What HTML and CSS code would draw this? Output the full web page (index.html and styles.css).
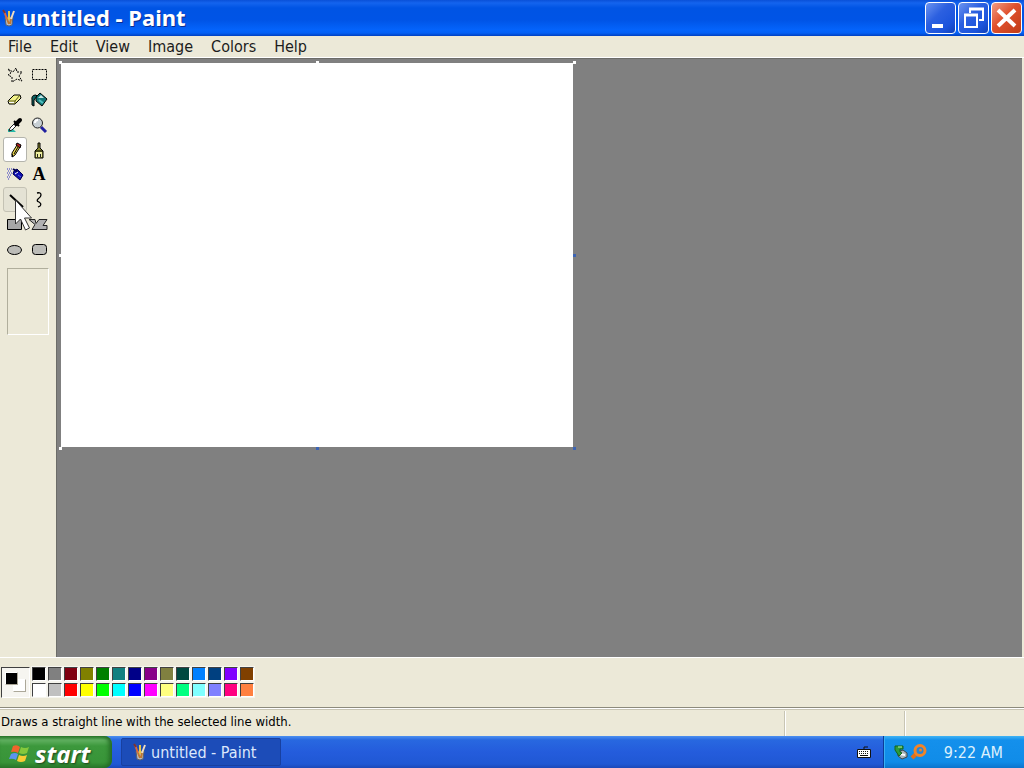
FILE: index.html
```html
<!DOCTYPE html>
<html lang="en">
<head>
    <meta charset="UTF-8">
    <meta name="viewport" content="width=device-width, initial-scale=1.0">
    <title>untitled - Paint</title>
    <link rel="stylesheet" href="styles.css">
</head>
<body>
    <!-- shared icon, used by the title bar and the taskbar -->
    <svg class="defs" width="0" height="0">
        <symbol id="paint" viewBox="0 0 14 18">
            <path d="M3 8h8l-1 8q-3 2-6 0z" fill="#b9bcc4" stroke="#59606e"/>
            <path d="M5 10L2 2" stroke="#e06a3a" stroke-width="2"/>
            <path d="M7 11V2" stroke="#e9c84a" stroke-width="2"/>
            <path d="M9 10l3-8" stroke="#f0ddc0" stroke-width="2"/>
            <path d="M5 10l2 5M9 10l-1 5" stroke="#c07830" stroke-width="2"/>
            <path d="M1 1l2 3" stroke="#7a3434" stroke-width="2"/>
        </symbol>
    </svg>

    <div class="window">
        <header class="titlebar">
            <svg class="title-icon" width="14" height="18"><use href="#paint"/></svg>
            <h1>untitled - Paint</h1>
            <div class="controls">
                <button class="control" aria-label="Minimize">
                    <svg width="30" height="30" viewBox="0 0 30 30"><path d="M6 21h11v4H6z" fill="#fff"/></svg>
                </button>
                <button class="control" aria-label="Restore">
                    <svg width="30" height="30" viewBox="0 0 30 30" fill="none" stroke="#fff">
                        <path d="M11 10V6h13v11h-4" stroke-width="2"/><path d="M10 6h15" stroke-width="3"/>
                        <path d="M6 12h12v12H6z" stroke-width="2"/><path d="M5 12h14" stroke-width="3"/>
                    </svg>
                </button>
                <button class="control close" aria-label="Close">
                    <svg width="30" height="30" viewBox="0 0 30 30"><path d="M6 7l17 16M23 7L6 23" stroke="#fff" stroke-width="4"/></svg>
                </button>
            </div>
        </header>

        <nav class="menubar">
            <button>File</button>
            <button>Edit</button>
            <button>View</button>
            <button>Image</button>
            <button>Colors</button>
            <button>Help</button>
        </nav>

        <main class="workspace">
            <aside class="sidebar">
                <div class="tools">
                    <button class="tool" aria-label="Free-form select">
                        <svg width="18" height="18" viewBox="0 0 18 18"><path d="M2 3l5 3 3-4 1 4 5 0-3 4 3 5-5-2-5 3 0-5-4-2 3-2z" fill="none" stroke="#000" stroke-dasharray="2 1"/></svg>
                    </button>
                    <button class="tool" aria-label="Select">
                        <svg width="18" height="18" viewBox="0 0 18 18"><path d="M2.500 3.500h14v10h-14z" fill="none" stroke="#000" stroke-dasharray="2 1"/></svg>
                    </button>
                    <button class="tool" aria-label="Eraser">
                        <svg width="18" height="18" viewBox="0 0 18 18"><path d="M2 10l6-6h6l1 3-6 6H3z" fill="#f4f488" stroke="#000"/><path d="M2 10h7l5-6M9 10v3" fill="none" stroke="#55551c"/><path d="M3 11h5v1H3z" fill="#fff"/></svg>
                    </button>
                    <button class="tool" aria-label="Fill">
                        <svg width="18" height="18" viewBox="0 0 18 18"><path d="M6 6l4-4 7 6-5 7-6-5z" fill="#147878" stroke="#000"/><path d="M8 7l3-3 3 3z" fill="#c8e4e4"/><path d="M9 9l4 3" stroke="#50c0c0" stroke-width="2"/><path d="M6 4Q1 4 2 9v5l2 1V9l3-4z" fill="#0c6464" stroke="#000"/></svg>
                    </button>
                    <button class="tool" aria-label="Pick color">
                        <svg width="18" height="18" viewBox="0 0 18 18"><path d="M2 13h5l3 3H2z" fill="#28b8a8"/><path d="M3 15l1-3 5-5 2 2-5 5z" fill="#fff" stroke="#222"/><path d="M8 5l5 5" stroke="#000" stroke-width="2"/><path d="M10 8l4-4" stroke="#000" stroke-width="4" stroke-linecap="round"/></svg>
                    </button>
                    <button class="tool" aria-label="Magnifier">
                        <svg width="18" height="18" viewBox="0 0 18 18"><path d="M11 11l5 5" stroke="#2020a0" stroke-width="3"/><circle cx="7.500" cy="7" r="5" fill="#c8d0d4" stroke="#222"/><path d="M5 7q0-3 3-3" fill="none" stroke="#fff" stroke-width="2"/></svg>
                    </button>
                    <button class="tool active" aria-label="Pencil">
                        <svg width="18" height="18" viewBox="0 0 18 18"><path d="M6 16v-4l5-8 3 2-5 8z" fill="#f0dc50" stroke="#000"/><path d="M11 2l4 2-1 3-4-3z" fill="#b02020" stroke="#000"/><path d="M8 13l4-7M6 13l1 3" stroke="#000"/></svg>
                    </button>
                    <button class="tool" aria-label="Brush">
                        <svg width="18" height="18" viewBox="0 0 18 18"><path d="M8 2h2v5l3 3v7H5v-7l3-3z" fill="#8c8c30" stroke="#000"/><path d="M5 10h8" stroke="#000"/><path d="M6 11h6v5H6z" fill="#eeeea0"/><path d="M7.500 13v3M10.500 13v3" stroke="#222"/></svg>
                    </button>
                    <button class="tool" aria-label="Airbrush">
                        <svg width="18" height="18" viewBox="0 0 18 18"><path d="M8 5l3-2 6 6-3 5-7-6z" fill="#1010b0" stroke="#000050"/><path d="M7 3l5 3" stroke="#000050" stroke-width="2"/><path d="M9 8l3-2" stroke="#fff"/><path d="M12 9l3 2" stroke="#6068e0"/><path d="M1 3h6M2 5h4M1 7h5M2 9h3M1 11h3M2 13h1" stroke="#3030c0" stroke-dasharray="1 1"/></svg>
                    </button>
                    <button class="tool letter" aria-label="Text">A</button>
                    <button class="tool hover" aria-label="Line">
                        <svg width="18" height="18" viewBox="0 0 18 18"><path d="M4 4l13 12" stroke="#000" stroke-width="2"/></svg>
                    </button>
                    <button class="tool" aria-label="Curve">
                        <svg width="18" height="18" viewBox="0 0 18 18"><path d="M7 2q4-1 4 2 0 2-3 4-2 2 1 3 3 2 1 4l-2 1" fill="none" stroke="#000" stroke-width="1.300"/></svg>
                    </button>
                    <button class="tool" aria-label="Rectangle">
                        <svg width="18" height="18" viewBox="0 0 18 18"><path d="M1.500 3.500h14v10h-14z" fill="#a6a6a6" stroke="#000"/></svg>
                    </button>
                    <button class="tool" aria-label="Polygon">
                        <svg width="22" height="18" viewBox="0 0 22 18"><path d="M1 3.500h6l1 4 3-4h8l-4 6h4v4H4l3-5z" fill="#b2b2b2" stroke="#222"/></svg>
                    </button>
                    <button class="tool" aria-label="Ellipse">
                        <svg width="18" height="18" viewBox="0 0 18 18"><ellipse cx="8.500" cy="9" rx="7" ry="4.500" fill="#bcbcb8" stroke="#000"/></svg>
                    </button>
                    <button class="tool" aria-label="Rounded rectangle">
                        <svg width="18" height="18" viewBox="0 0 18 18"><rect x="2.500" y="3.500" width="14" height="10" rx="3" fill="#bcbcb8" stroke="#000"/></svg>
                    </button>
                </div>
                <div class="options"></div>
                <svg class="cursor" width="22" height="34" viewBox="0 0 22 34"><path d="M1.500 1v24l5-5 5 11 4-2-5-10h7z" fill="#fff" stroke="#333"/></svg>
            </aside>
            <section class="desk">
                <div class="canvas">
                    <i class="handle top left"></i>
                    <i class="handle top center"></i>
                    <i class="handle top right"></i>
                    <i class="handle middle left"></i>
                    <i class="handle middle right live"></i>
                    <i class="handle bottom left"></i>
                    <i class="handle bottom center live"></i>
                    <i class="handle bottom right live"></i>
                </div>
            </section>
        </main>

        <section class="colorbox">
            <div class="current"><i class="back"></i><i class="front"></i></div>
            <div class="swatches" id="swatches"></div>
        </section>

        <footer class="statusbar">
            <p>Draws a straight line with the selected line width.</p>
            <span></span>
            <span></span>
        </footer>
    </div>

    <div class="taskbar">
        <button class="start">
            <svg width="22" height="20" viewBox="0 0 22 20">
                <path d="M4 2q4-2 7 1L9 9Q6 7 2 8z" fill="#f0642c"/>
                <path d="M12 3q4 2 8 0l-2 6q-4 2-8 0z" fill="#84c83c"/>
                <path d="M2 10q4-2 7 0l-2 6q-3-2-7-1z" fill="#5c94f0"/>
                <path d="M10 11q4 2 8 0l-2 6q-4 2-8 0z" fill="#f8cc34"/>
            </svg>
            start
        </button>
        <button class="task">
            <svg width="14" height="18"><use href="#paint"/></svg>
            untitled - Paint
        </button>
        <svg class="keyboard" width="14" height="14" viewBox="0 0 14 14"><path d="M7 4V2h4" fill="none" stroke="#111"/><path d="M.5 4.500h13v8H.5z" fill="#fff" stroke="#111"/><path d="M2 6.500h10M2 8.500h10" stroke="#111" stroke-dasharray="1 1"/><path d="M3 10.500h8" stroke="#111"/></svg>
        <div class="tray">
            <svg width="14" height="16" viewBox="0 0 14 16"><path d="M4 8l5-2 4 3v4l-5 2-4-3z" fill="#a8b4b8" stroke="#3c484c"/><path d="M6 10l5 1" stroke="#fff" stroke-width="2"/><path d="M1 2h8v3H6v3l2 1-3 3-4-6z" fill="#2c9c3c" stroke="#14641c"/><path d="M4 3h4" stroke="#b8f0a8"/></svg>
            <svg width="18" height="16" viewBox="0 0 18 16"><path d="M7 9l-5 5" stroke="#e0701c" stroke-width="4"/><circle cx="10" cy="6.500" r="5" fill="#2486d8" stroke="#f08428" stroke-width="3"/><circle cx="10.500" cy="6" r="1.500" fill="#f08428"/></svg>
            <time>9:22 AM</time>
        </div>
    </div>

    <script>
        const colors = [
            "#000000", "#808080", "#800010", "#808000", "#008000", "#108080", "#000088",
            "#880088", "#808040", "#004840", "#0080ff", "#004080", "#8000ff", "#804000",
            "#ffffff", "#c0c0c0", "#ff0000", "#ffff00", "#00ff00", "#00ffff", "#0000ff",
            "#ff00ff", "#ffff80", "#00ff80", "#80ffff", "#8080ff", "#ff0080", "#ff8040"
        ];

        const box = document.getElementById("swatches");
        colors.forEach((color) => {
            const swatch = document.createElement("button");
            swatch.className = "swatch";
            swatch.style.background = color;
            swatch.setAttribute("aria-label", color);
            box.appendChild(swatch);
        });
    </script>
</body>
</html>
```
FILE: styles.css
```css
* {
    box-sizing: border-box;
}
body {
    margin: 0;
    height: 100vh;
    display: flex;
    flex-direction: column;
    overflow: hidden;
    background: #ece9d8;
    color: #000;
    font-family: "DejaVu Sans Condensed", "DejaVu Sans", sans-serif;
}
button {
    padding: 0;
    border: none;
    background: none;
    color: inherit;
    font: inherit;
}
svg {
    display: block;
    flex: none;
}
.defs {
    position: absolute;
}
.window {
    flex: 1;
    min-height: 0;
    display: flex;
    flex-direction: column;
}

/* title bar */
.titlebar {
    height: 36px;
    flex: none;
    display: flex;
    align-items: center;
    gap: 6px;
    padding: 0 2px;
    background: linear-gradient(#0a50d8 0, #1464ee 3px, #0054e4 8px, #0054e6 20px, #0464fc 30px, #0460f4 33px, #0040c0 36px);
}
.titlebar h1 {
    flex: 1;
    margin: 0;
    color: #fff;
    font-family: "Noto Sans", sans-serif;
    font-size: 22px;
    font-weight: bold;
    line-height: 32px;
    padding-bottom: 2px;
    text-shadow: 1px 1px #0a2c90;
}
.controls {
    display: flex;
    gap: 2px;
}
.control {
    width: 31px;
    height: 32px;
    border: 1px solid #fff;
    border-radius: 4px;
    background: linear-gradient(135deg, #6c94f0, #2c60e0 40%, #1c54dc 75%, #1040b8);
}
.control.close {
    background: linear-gradient(135deg, #f09c84, #e0502c 45%, #c03c18);
}

/* menu */
.menubar {
    height: 21px;
    flex: none;
    display: flex;
    gap: 18px;
    padding: 0 8px;
    color: #1c1c1c;
    font-size: 16px;
    line-height: 21px;
}

/* workspace */
.workspace {
    flex: 1;
    min-height: 0;
    display: flex;
    border-top: 1px solid #fff;
}
.sidebar {
    position: relative;
    width: 56px;
    flex: none;
    padding: 4px 3px;
}
.tools {
    display: grid;
    grid-template-columns: 24px 24px;
    grid-auto-rows: 25px;
    margin-bottom: 6px;
}
.tool {
    display: flex;
    align-items: center;
    justify-content: center;
    border: 1px solid transparent;
    border-radius: 3px;
}
.tool.active {
    border-color: #b4b4ac;
    background: #fff;
}
.tool.hover {
    border-color: #c4c2b4;
    background: #e4e2d4;
}
.tool.letter {
    font-family: "Liberation Serif", serif;
    font-size: 18px;
    font-weight: bold;
}
.options {
    width: 42px;
    height: 67px;
    margin-left: 4px;
    border: 1px solid;
    border-color: #b0ae9c #fff #fff #b0ae9c;
}
.cursor {
    position: absolute;
    left: 14px;
    top: 141px;
}
.desk {
    flex: 1;
    padding: 4px;
    margin-right: 2px;
    border-left: 1px solid #6c6c68;
    border-top: 1px solid #6c6c68;
    background: #808080;
}
.canvas {
    position: relative;
    width: 512px;
    height: 384px;
    background: #fff;
}
.handle {
    position: absolute;
    width: 3px;
    height: 3px;
    background: #fff;
}
.handle.live {
    background: #3c64b4;
}
.handle.top {
    top: -2px;
}
.handle.middle {
    top: 191px;
}
.handle.bottom {
    bottom: -3px;
}
.handle.left {
    left: -2px;
}
.handle.center {
    left: 255px;
}
.handle.right {
    right: -3px;
}

/* color box */
.colorbox {
    height: 50px;
    flex: none;
    display: flex;
    gap: 2px;
    padding: 9px 1px;
    border-top: 1px solid #fff;
}
.current {
    position: relative;
    width: 29px;
    height: 31px;
    border: 1px solid;
    border-color: #404040 #fff #fff #404040;
    background: #f6f5f0;
}
.current i {
    position: absolute;
    width: 13px;
    height: 13px;
    border: 1px solid;
    border-color: #fff #aca899 #aca899 #fff;
}
.current .front {
    left: 3px;
    top: 4px;
    background: #000;
}
.current .back {
    right: 3px;
    bottom: 5px;
    background: #fff;
}
.swatches {
    display: grid;
    grid-template-columns: repeat(14, 14px);
    grid-auto-rows: 14px;
    gap: 2px;
}
.swatch {
    border: 1px solid;
    border-color: #404040 #fff #fff #404040;
    outline: 1px solid #f6f5ee;
}

/* status bar */
.statusbar {
    height: 29px;
    flex: none;
    display: flex;
    border-top: 1px solid #8c8a7c;
    box-shadow: inset 0 1px #fff, inset 0 2px #c8c5b4;
    font-size: 13px;
    line-height: 28px;
}
.statusbar p {
    flex: 1;
    margin: 0;
    padding-left: 1px;
}
.statusbar span {
    width: 120px;
    margin-top: 3px;
    border-left: 1px solid #c8c5b4;
    box-shadow: inset 1px 0 #fff;
}

/* taskbar */
.taskbar {
    height: 32px;
    flex: none;
    display: flex;
    align-items: center;
    background: linear-gradient(#4c90f0 0, #2868e0 4px, #245cdc 16px, #2058d4 28px, #1c48b8);
    color: #fff;
    font-size: 16px;
}
.start {
    width: 112px;
    height: 32px;
    display: flex;
    align-items: center;
    gap: 4px;
    padding-left: 9px;
    padding-top: 4px;
    border-radius: 0 8px 8px 0;
    background: linear-gradient(#2c7c2c 0, #60b060 4px, #3c983c 10px, #389438 26px, #2c7c2c);
    box-shadow: inset -3px 0 4px #246c24;
    font-family: "Noto Sans", sans-serif;
    font-size: 24px;
    font-style: italic;
    font-weight: bold;
    line-height: 28px;
    text-shadow: 1px 1px 2px #1c401c;
}
.task {
    width: 160px;
    height: 28px;
    display: flex;
    align-items: center;
    gap: 4px;
    margin-left: 9px;
    margin-right: auto;
    padding-left: 11px;
    border: 1px solid #1840a0;
    border-radius: 2px;
    background: #1c4cb8;
    color: #dce8fc;
}
.keyboard {
    margin-right: 12px;
}
.tray {
    height: 32px;
    display: flex;
    align-items: center;
    gap: 2px;
    padding: 0 21px 0 10px;
    border-left: 1px solid #0c3c98;
    background: linear-gradient(#40b4f4 0, #1490ec 4px, #108ce8 26px, #0c74cc);
    box-shadow: inset 1px 0 #38b0f4;
    color: #dcf0fc;
}
.tray time {
    margin-left: 14px;
}
```
